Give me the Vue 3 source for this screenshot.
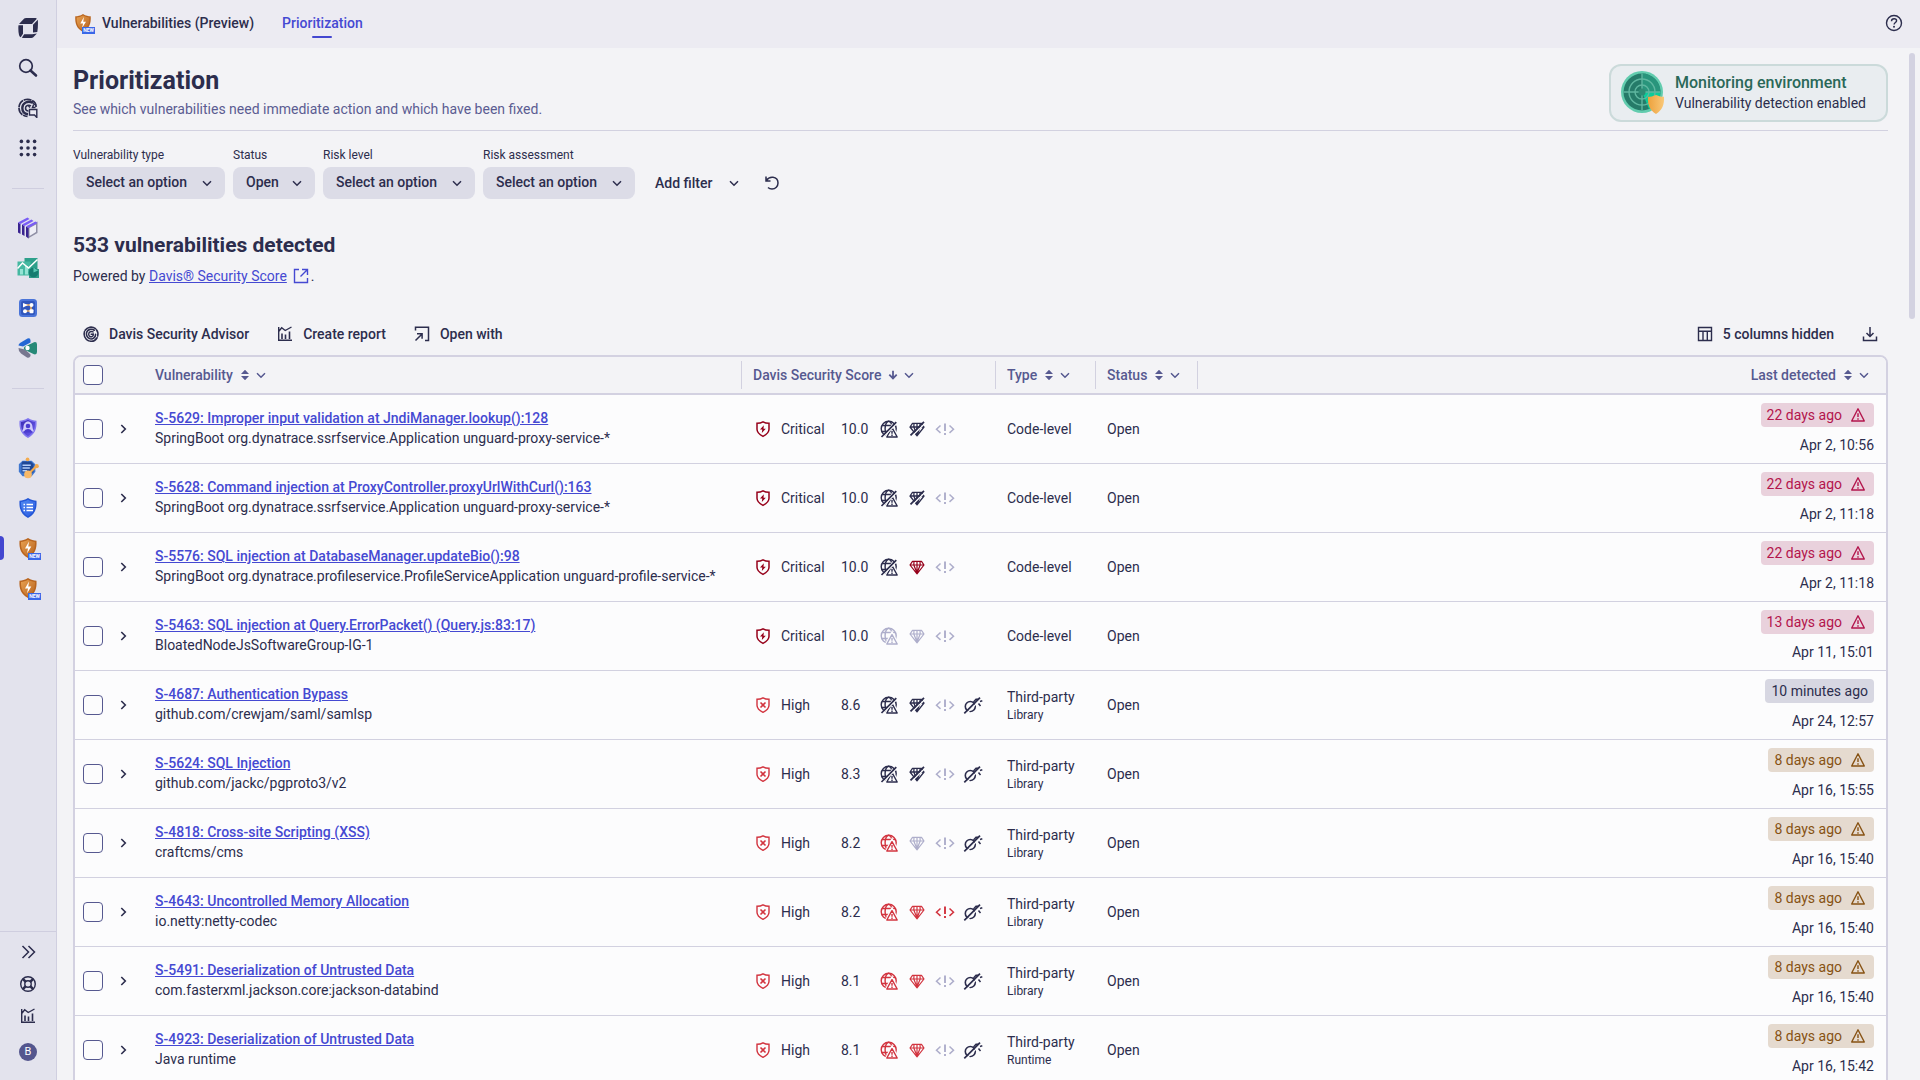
<script setup>
import { ref } from 'vue'

const railApps = [
  ['cubes', 'Kubernetes'],
  ['dashboards', 'Dashboards'],
  ['workflows', 'Workflows'],
  ['services', 'Services'],
]
const railSecurity = [
  { icon: 'attack', name: 'Attacks' },
  { icon: 'investigate', name: 'Investigations' },
  { icon: 'posture', name: 'Security posture' },
  { icon: 'shield', name: 'Vulnerabilities', active: true, fresh: true },
  { icon: 'shield', name: 'Security overview', fresh: true },
]

const filters = ref([
  { id: 'type', label: 'Vulnerability type', value: 'Select an option', wide: true },
  { id: 'status', label: 'Status', value: 'Open', wide: false },
  { id: 'risk', label: 'Risk level', value: 'Select an option', wide: true },
  { id: 'assessment', label: 'Risk assessment', value: 'Select an option', wide: true },
])

const columns = [
  { key: 'vulnerability', label: 'Vulnerability', sort: 'sort' },
  { key: 'score', label: 'Davis Security Score', sort: 'down' },
  { key: 'type', label: 'Type', sort: 'sort' },
  { key: 'status', label: 'Status', sort: 'sort' },
]

const none = { globe: 'off', gem: 'off', code: 'none' }
const rows = [
  { title: 'S-5629: Improper input validation at JndiManager.lookup():128', entity: 'SpringBoot org.dynatrace.ssrfservice.Application unguard-proxy-service-*', level: 'Critical', score: '10.0', ...none, type: 'Code-level', age: '22 days ago', tone: 'red', date: 'Apr 2, 10:56' },
  { title: 'S-5628: Command injection at ProxyController.proxyUrlWithCurl():163', entity: 'SpringBoot org.dynatrace.ssrfservice.Application unguard-proxy-service-*', level: 'Critical', score: '10.0', ...none, type: 'Code-level', age: '22 days ago', tone: 'red', date: 'Apr 2, 11:18' },
  { title: 'S-5576: SQL injection at DatabaseManager.updateBio():98', entity: 'SpringBoot org.dynatrace.profileservice.ProfileServiceApplication unguard-profile-service-*', level: 'Critical', score: '10.0', globe: 'off', gem: 'on', code: 'none', type: 'Code-level', age: '22 days ago', tone: 'red', date: 'Apr 2, 11:18' },
  { title: 'S-5463: SQL injection at Query.ErrorPacket() (Query.js:83:17)', entity: 'BloatedNodeJsSoftwareGroup-IG-1', level: 'Critical', score: '10.0', globe: 'none', gem: 'none', code: 'none', type: 'Code-level', age: '13 days ago', tone: 'red', date: 'Apr 11, 15:01' },
  { title: 'S-4687: Authentication Bypass', entity: 'github.com/crewjam/saml/samlsp', level: 'High', score: '8.6', ...none, type: 'Third-party', sub: 'Library', age: '10 minutes ago', tone: 'neutral', date: 'Apr 24, 12:57' },
  { title: 'S-5624: SQL Injection', entity: 'github.com/jackc/pgproto3/v2', level: 'High', score: '8.3', ...none, type: 'Third-party', sub: 'Library', age: '8 days ago', tone: 'amber', date: 'Apr 16, 15:55' },
  { title: 'S-4818: Cross-site Scripting (XSS)', entity: 'craftcms/cms', level: 'High', score: '8.2', globe: 'on', gem: 'none', code: 'none', type: 'Third-party', sub: 'Library', age: '8 days ago', tone: 'amber', date: 'Apr 16, 15:40' },
  { title: 'S-4643: Uncontrolled Memory Allocation', entity: 'io.netty:netty-codec', level: 'High', score: '8.2', globe: 'on', gem: 'on', code: 'on', type: 'Third-party', sub: 'Library', age: '8 days ago', tone: 'amber', date: 'Apr 16, 15:40' },
  { title: 'S-5491: Deserialization of Untrusted Data', entity: 'com.fasterxml.jackson.core:jackson-databind', level: 'High', score: '8.1', globe: 'on', gem: 'on', code: 'none', type: 'Third-party', sub: 'Library', age: '8 days ago', tone: 'amber', date: 'Apr 16, 15:40' },
  { title: 'S-4923: Deserialization of Untrusted Data', entity: 'Java runtime', level: 'High', score: '8.1', globe: 'on', gem: 'on', code: 'none', type: 'Third-party', sub: 'Runtime', age: '8 days ago', tone: 'amber', date: 'Apr 16, 15:42' },
]
</script>

<template>
  <div class="shell">
    <svg class="sprite" aria-hidden="true">
      <defs>
        <linearGradient id="g-orange" x1="0" y1="0" x2="1" y2="1"><stop offset="0" stop-color="#e8a050" /><stop offset="1" stop-color="#b86420" /></linearGradient>
        <linearGradient id="g-gold" x1="0" y1="0" x2="1" y2="0"><stop offset="0" stop-color="#eda13c" /><stop offset="1" stop-color="#f9c878" /></linearGradient>
        <linearGradient id="g-violet" x1="0" y1="0" x2="1" y2="1"><stop offset="0" stop-color="#3a2bb4" /><stop offset="1" stop-color="#6c5cf0" /></linearGradient>
        <linearGradient id="g-blue" x1="0" y1="0" x2="1" y2="1"><stop offset="0" stop-color="#5089f2" /><stop offset="1" stop-color="#2b5be0" /></linearGradient>
      </defs>
      <symbol id="i-logo" viewBox="0 0 20 20">
        <path fill="currentColor" d="M6.200.6Q7 0 8 0H17.500Q19 .1 18.600 1L14 6H1ZM.5 7.200H5v8.600L2.700 19.300Q1.500 19 1 17 0 12 .5 7.200ZM15 6.800 19.800 1.700Q20.300 8 19.300 14L15 14.600ZM3.800 19.700 6.200 16.300h8l4.700-.7-3.600 3.700q-.8.7-2 .7-5 .2-9.500-.3Z" />
      </symbol>
      <symbol id="i-search" viewBox="0 0 20 20">
        <circle cx="8" cy="8" r="6.300" fill="none" stroke="currentColor" stroke-width="1.700" /><path d="m12.500 12.500 5.500 5" stroke="currentColor" stroke-width="2.600" stroke-linecap="round" />
      </symbol>
      <symbol id="i-davis" viewBox="-2 -2 24 24">
        <g fill="none" stroke="currentColor" stroke-linecap="round">
          <path d="M15.500 3.500C11 .5 5.500 1.500 3 5.500M2.200 7C.8 11 2.500 16 7 18M8.500 18.500c3.500.8 7-1 8.800-4M18 12.500c.8-3 .2-5.500-1.500-7.500" stroke-width="1.900" />
          <path d="M14 5.500C10.500 3 6.500 4.500 5 7.500c-1.500 3.500.5 7.500 4 8.300 3.500.7 6.500-2 6.500-5.500" stroke-width="1.900" />
          <path d="M12.500 7.500C9.500 6 7.200 8 7.200 10.200c0 2.300 2.200 3.600 4 2.900 1.400-.6 1.800-1.800 1.600-3l-2.600.2" stroke-width="1.700" />
        </g>
      </symbol>
      <symbol id="i-copilot" viewBox="0 0 20 20">
        <g fill="none" stroke="currentColor">
          <path d="M18 9C18.500 3 12 .8 8 1.500 3 2.500.8 6.500 1 10.500c.3 4.500 3.500 7.500 8.500 8" stroke-width="1.700" stroke-dasharray="8 .7" />
          <path d="M14.500 4.800C10 2 4.300 5 4.300 10c0 4 2.500 6 5.700 6.300" stroke-width="2.400" /><path d="M13 8c-2.500-2-5.500 0-5.500 2s1 3 3 3" stroke-width="1.500" />
          <path d="M11.500 17v-5.500h7.300v8l-2.300-2.500h-5Z" stroke-width="1.400" fill="#e9e9f2" /><path d="m14 3 1.500 3 2.500 1M10.500 8l1.500 1.500M15.500 7l-1 2.500h3" stroke-width="1.500" />
        </g>
      </symbol>
      <symbol id="i-grid" viewBox="0 0 20 20">
        <g fill="currentColor"><circle v-for="n in 9" :key="n" :cx="3.400 + ((n - 1) % 3) * 6.600" :cy="3.400 + Math.floor((n - 1) / 3) * 6.600" r="1.800" /></g>
      </symbol>
      <symbol id="i-cubes" viewBox="0 0 22 22">
        <path d="M10 9 20.500 4.500V16L11 21.500Z" fill="#8f8fa5" /><path d="m12.500 11 6.500-3.500v7.500l-6.500 4Z" fill="#eeeef6" />
        <path d="M1 5.500 3.500 7v10L1 15.500ZM5 7.500 7.500 9v10L5 17.500ZM9 9.500l2.500 1.500v10.500L9 19.500Z" fill="#39238f" />
        <path d="m1 5.500 9.500-5L12.500 2 3.500 7ZM5 7.500l9.500-5 2 1.500L7.500 9ZM9 9.500l9.500-5 2 1.500-9 5Z" fill="#7a5df5" />
      </symbol>
      <symbol id="i-dashboards" viewBox="0 0 22 22">
        <path d="M7.500 1h13v13h-13Z" fill="#2ea08b" /><path d="M.5 4.500h13v14H.5Z" fill="#45b8a1" /><path d="M3 12h3v5.500H3zm5-3h3v8.500H8z" fill="#95e3d4" />
        <path d="M12 12h10v9H12Z" fill="#2f9a88" /><circle cx="16.500" cy="15.500" r="4.800" fill="#167c70" /><path d="M16.500 10.500v5l4.500-2" fill="#5ac8b3" /><path d="m.5 11.500 5-5.500 6 5 9-8.500" fill="none" stroke="#fff" stroke-width="1.500" />
      </symbol>
      <symbol id="i-workflows" viewBox="0 0 22 22">
        <rect x="2" y="2" width="18" height="18" rx="3.500" fill="#4a74d8" /><rect x="4" y="4" width="14" height="14" rx="2" fill="#3157bd" />
        <path d="M8 8h6v6H8" fill="none" stroke="#efb060" stroke-width="1.600" /><path d="m6 6 5 2-5 2.500Z" fill="#fff" /><circle cx="14.500" cy="8" r="2" fill="#fff" /><circle cx="8" cy="14.200" r="2" fill="#fff" /><rect x="12.500" y="12.300" width="4" height="4" rx="1" fill="#fff" />
      </symbol>
      <symbol id="i-services" viewBox="0 0 22 22">
        <path d="M1.500 8.500Q1.500 7 3 6L10.500 1.500Q13.500.5 13.500 3.500v2L6 9.500Z" fill="#2467d4" /><path d="M1.500 11 8 12.500l5.500 5V19q-1 2.500-3.500 1.500L4 16.500Q1.200 14 1.500 11Z" fill="#77778f" /><path d="M7.500 9.700 17 5.200q3-.7 3 2.300v7.500q0 3-3 2.300l-9.500-4.500q-1.500-1.500 0-3.100Z" fill="#268977" /><circle cx="10.500" cy="11" r="2.200" fill="#fff" />
      </symbol>
      <symbol id="i-attack" viewBox="0 0 22 22">
        <path d="M11 1c3 2 6 2.500 8.500 2.700.5 8-1.500 13.500-8.500 17.300C4 17.200 2 11.700 2.500 3.700 5 3.500 8 3 11 1Z" fill="#8076ef" /><path d="M11 2.800c2.500 1.400 4.800 2 7 2.200.2 6.500-1.500 11-7 14.300C5.500 16 3.800 11.500 4 5c2.200-.2 4.500-.8 7-2.200Z" fill="url(#g-violet)" /><path d="M11 4.500c2.500 0 4.500 2.500 4.500 5.500 0 1.500 1 3 1.500 4.500H5C5.500 13 6.500 11.500 6.500 10c0-3 2-5.500 4.500-5.500Z" fill="#cfcaf9" /><circle cx="11" cy="9" r="2.300" fill="#4a3bd0" /><path d="M6.500 15.500c1-2.500 2.500-3.500 4.500-3.500s3.500 1 4.500 3.500Z" fill="#4a3bd0" />
      </symbol>
      <symbol id="i-investigate" viewBox="0 0 24 24">
        <path d="M6 4h10l4 4v8l-4 5H6l-4-5V8Z" fill="#3f77cf" /><path d="M6 5h9l3 3v9H5V7Z" fill="#1f4896" /><path d="M6 9h9M6 12h8M6 15h5" stroke="#b2cdfa" stroke-width="1.400" /><path d="m12 19 9-9" stroke="#f3a94b" stroke-width="2.300" /><circle cx="12" cy="19" r="4.200" fill="#f7b968" /><circle cx="21.500" cy="10" r="2.300" fill="#f3ab50" /><circle cx="11.500" cy="2.500" r="2" fill="#f3ab50" />
      </symbol>
      <symbol id="i-posture" viewBox="0 0 22 22">
        <path d="M11 1c3 2 6 2.500 8.500 2.700.5 8-1.500 13.500-8.500 17.300C4 17.200 2 11.700 2.500 3.700 5 3.500 8 3 11 1Z" fill="#2457d6" /><path d="M11 2.800c2.500 1.400 4.800 2 7 2.200.2 6.500-1.500 11-7 14.300C5.500 16 3.800 11.500 4 5c2.200-.2 4.500-.8 7-2.200Z" fill="url(#g-blue)" /><path d="M6.500 7.500H8m1.500 0H16M6.500 10.500H8m1.500 0H16M6.500 13.500H8m1.500 0H16" stroke="#fff" stroke-width="1.300" />
      </symbol>
      <symbol id="i-shield" viewBox="0 0 22 22">
        <path d="M11 1c3 2 6 2.500 8.500 2.700.5 8-1.500 13.500-8.500 17.300C4 17.200 2 11.700 2.500 3.700 5 3.500 8 3 11 1Z" fill="#b9651f" /><path d="M11 2.800c2.500 1.400 4.800 2 7 2.200.2 6.500-1.500 11-7 14.300C5.500 16 3.800 11.500 4 5c2.200-.2 4.500-.8 7-2.200Z" fill="url(#g-orange)" /><path d="M12 4.500 8 11.500h3l-1 5 4.300-7h-3Z" fill="#fff" />
      </symbol>
      <symbol id="i-expand" viewBox="0 0 20 20"><path d="m4.500 4 6 6-6 6M10.500 4l6 6-6 6" fill="none" stroke="currentColor" stroke-width="1.500" /></symbol>
      <symbol id="i-support" viewBox="0 0 20 20">
        <g fill="none" stroke="currentColor" stroke-width="1.400"><circle cx="10" cy="10" r="7.300" /><circle cx="10" cy="10" r="3.200" /><path d="m4.800 4.800 3 3M15.200 4.800l-3 3M4.800 15.200l3-3M15.200 15.200l-3-3" stroke-width="2.600" /></g>
      </symbol>
      <symbol id="i-report" viewBox="0 0 20 20">
        <g fill="none" stroke="currentColor" stroke-width="1.400"><path d="M3.700 3v13.300H17M3.700 7.500l3-3.700 3.500 2.700L16.500 3" /><path d="M7 9.500V15M10.500 10.500V15M14.500 7.500V15" stroke-width="1.600" /></g>
      </symbol>
      <symbol id="i-open" viewBox="0 0 20 20">
        <g fill="none" stroke="currentColor" stroke-width="1.500"><path d="M3.500 6.500V3.200h13v13.300H13M3.500 16.500l6.300-6.300M5 9.700h5.100v5.100" /></g>
      </symbol>
      <symbol id="i-help" viewBox="0 0 20 20">
        <g fill="none" stroke="currentColor" stroke-width="1.400"><circle cx="10" cy="10" r="7.500" /><path d="M7.500 8.200c0-1.600 1-2.500 2.600-2.500 1.500 0 2.500.8 2.500 2.100 0 1.700-2.500 1.800-2.500 3.700" /></g><circle cx="10" cy="13.800" r="1" fill="currentColor" />
      </symbol>
      <symbol id="i-chevron" viewBox="0 0 16 16"><path d="m4 6.200 4 4 4-4" fill="none" stroke="currentColor" stroke-width="1.500" /></symbol>
      <symbol id="i-chevron-right" viewBox="0 0 16 16"><path d="m6.300 4 4 4-4 4" fill="none" stroke="currentColor" stroke-width="1.600" /></symbol>
      <symbol id="i-reset" viewBox="0 0 20 20"><path d="M4 3.500V8h4.500M4.300 7.500C6 5 8.500 4 11 4.300c3 .4 5 2.800 5 5.700 0 3.200-2.500 6-6 6-1.700 0-3-.5-4-1.500" fill="none" stroke="currentColor" stroke-width="1.500" /></symbol>
      <symbol id="i-external" viewBox="0 0 20 20"><path d="M8 3.500H3.500v13h13V12M11 3.500h5.500V9M16.500 3.500l-7 7" fill="none" stroke="currentColor" stroke-width="1.400" /></symbol>
      <symbol id="i-columns" viewBox="0 0 20 20"><path d="M3.500 3.500h13v13h-13ZM3.500 7.300h13M8 7.300v9.200M12.300 7.300v9.200" fill="none" stroke="currentColor" stroke-width="1.400" /></symbol>
      <symbol id="i-download" viewBox="0 0 20 20"><path d="M3.500 12.500v4h13v-4M10 3v9.500M6.500 9l3.500 3.500L13.500 9" fill="none" stroke="currentColor" stroke-width="1.500" /></symbol>
      <symbol id="i-sort" viewBox="0 0 12 16"><path d="M2 7h8L6 2.800ZM2 9h8l-4 4.200Z" fill="currentColor" /></symbol>
      <symbol id="i-down" viewBox="0 0 12 16"><path d="M6 3.800v7.500M2.300 7.700 6 11.400l3.700-3.700" fill="none" stroke="currentColor" stroke-width="1.800" /></symbol>
      <symbol id="i-warn" viewBox="0 0 20 20"><path d="M10 3.800 16.300 16H3.700Z" fill="none" stroke="currentColor" stroke-width="1.400" stroke-linejoin="round" /><path d="M10 8.200v3.800M10 13.200v1.500" stroke="currentColor" stroke-width="1.400" /></symbol>
      <symbol id="i-Critical" viewBox="0 0 20 20"><path d="M10 2.800c2 1.200 4 1.500 6 1.500v6c0 3-2.500 5.300-6 7-3.500-1.700-6-4-6-7v-6c2 0 4-.3 6-1.500Z" fill="none" stroke="currentColor" stroke-width="1.500" /><path d="M10.800 6.200 7 10.500h2.300L8.800 14l4-4.300h-2.300Z" fill="currentColor" /></symbol>
      <symbol id="i-High" viewBox="0 0 20 20"><path d="M10 2.800c2 1.200 4 1.500 6 1.500v6c0 3-2.500 5.300-6 7-3.500-1.700-6-4-6-7v-6c2 0 4-.3 6-1.500Z" fill="none" stroke="currentColor" stroke-width="1.400" /><path d="m7.500 7.500 5 5m0-5-5 5" stroke="currentColor" stroke-width="1.600" /></symbol>
      <symbol id="i-globe-on" viewBox="0 0 20 20">
        <g fill="none" stroke="currentColor" stroke-width="1.400"><circle cx="9.700" cy="9.700" r="7.500" /><ellipse cx="9.700" cy="9.700" rx="3.600" ry="7.500" /><path d="M3 6.500h13.500M2.500 12.500h14" /></g>
        <path d="m13 7.700 5.500 10.600h-11Z" fill="#fcfcfd" stroke="#fcfcfd" stroke-width="3.200" />
        <path d="m13 8.700 5.200 9.300H7.800Z" fill="none" stroke="currentColor" stroke-width="1.400" stroke-linejoin="round" /><path d="M13 12v2.800M13 15.600V17" stroke="currentColor" stroke-width="1.400" />
      </symbol>
      <symbol id="i-globe-off" viewBox="0 0 20 20">
        <g fill="none" stroke="currentColor" stroke-width="1.400"><circle cx="9.700" cy="9.700" r="7.500" /><ellipse cx="9.700" cy="9.700" rx="3.600" ry="7.500" /><path d="M3 6.500h13.500M2.500 12.500h14" /></g>
        <path d="m13 7.700 5.500 10.600h-11Z" fill="#fcfcfd" stroke="#fcfcfd" stroke-width="3.200" />
        <path d="m13 8.700 5.200 9.300H7.800Z" fill="none" stroke="currentColor" stroke-width="1.400" stroke-linejoin="round" /><path d="M13 12v2.800M13 15.600V17" stroke="currentColor" stroke-width="1.400" />
        <path d="M4 18.300 18 4.300" stroke="#fcfcfd" stroke-width="1.400" /><path d="M2.500 18 17.300 3.200" stroke="currentColor" stroke-width="1.700" />
      </symbol>
      <symbol id="i-gem-on" viewBox="0 0 20 20"><path d="M5.500 4.300h9L17 8l-7 8.800L3 8ZM3 8h14M7 4.500 6.800 8l3.200 8M13 4.500l.2 3.500-3.200 8M10 4v12" fill="none" stroke="currentColor" stroke-width="1.200" stroke-linejoin="round" /></symbol>
      <symbol id="i-gem-off" viewBox="0 0 20 20">
        <path d="M5.500 4.300h9L17 8l-7 8.800L3 8ZM3 8h14M7 4.500 6.800 8l3.200 8M13 4.500l.2 3.500-3.200 8M10 4v12" fill="none" stroke="currentColor" stroke-width="1.300" stroke-linejoin="round" />
        <path d="M4.800 17.300 18 4.200" stroke="#fcfcfd" stroke-width="1.400" /><path d="M3.500 16.300 17 2.800" stroke="currentColor" stroke-width="1.700" />
      </symbol>
      <symbol id="i-code" viewBox="0 0 20 20"><path d="m5.500 6.500-4 3.700 4 3.700M14.500 6.500l4 3.700-4 3.700" fill="none" stroke="currentColor" stroke-width="1.500" /><path d="M10 4.500V12M10 14v2" stroke="currentColor" stroke-width="1.900" /></symbol>
      <symbol id="i-bomb" viewBox="0 0 20 20">
        <circle cx="7.300" cy="11.500" r="5" fill="none" stroke="currentColor" stroke-width="1.600" /><path d="m10.500 7 2.500-2.800h2" fill="none" stroke="currentColor" stroke-width="1.400" />
        <path d="M3 19 17 5" stroke="#fcfcfd" stroke-width="1.300" /><path d="M1.300 18.300 17 2.600" stroke="currentColor" stroke-width="1.700" />
        <path d="m17 6.500 2.300-.7M15.500 8.500l2 2.500" stroke="currentColor" stroke-width="1.500" />
      </symbol>
      <symbol id="i-radar" viewBox="0 0 44 44">
        <circle cx="21" cy="21" r="21" fill="#62ccae" /><circle cx="21" cy="21" r="18.500" fill="#257b69" />
        <path d="M21 21V2.500A18.500 18.500 0 0 1 39.500 21Z" fill="#29957c" /><path d="M21 21h18.500A18.500 18.500 0 0 1 28 38Z" fill="#0ccc99" />
        <g fill="none" stroke="#5fb7a0" stroke-width="1.400"><circle cx="21" cy="21" r="13" /><circle cx="21" cy="21" r="7" /><path d="M21 2.500v37M2.500 21h37" /></g><circle cx="21" cy="21" r="3.500" fill="#2f8a74" />
        <path d="M35 24c3 1.300 5.500 1.800 8 1.800.5 8-1.800 13.500-8 17.200-6.200-3.700-8.500-9.200-8-17.200 2.500 0 5-.5 8-1.800Z" fill="url(#g-gold)" />
      </symbol>
    </svg>

    <nav class="rail" aria-label="Main">
      <a href="#" class="rail-item" aria-label="Home"><svg class="ic20"><use href="#i-logo" /></svg></a>
      <button class="rail-item" aria-label="Search"><svg class="ic20"><use href="#i-search" /></svg></button>
      <button class="rail-item" aria-label="Davis CoPilot"><svg class="ic20"><use href="#i-copilot" /></svg></button>
      <button class="rail-item" aria-label="Apps"><svg class="ic20"><use href="#i-grid" /></svg></button>
      <hr />
      <a v-for="[icon, name] in railApps" :key="name" href="#" class="rail-item" :aria-label="name"><svg class="ic22"><use :href="'#i-' + icon" /></svg></a>
      <hr />
      <a v-for="item in railSecurity" :key="item.name" href="#" class="rail-item" :class="{ active: item.active }" :aria-label="item.name">
        <span class="badged"><svg class="ic22"><use :href="'#i-' + item.icon" /></svg><span v-if="item.fresh" class="new">NEW</span></span>
      </a>
      <div class="rail-foot">
        <button aria-label="Expand"><svg class="ic20"><use href="#i-expand" /></svg></button>
        <button aria-label="Support"><svg class="ic20"><use href="#i-support" /></svg></button>
        <button aria-label="Usage"><svg class="ic20"><use href="#i-report" /></svg></button>
        <button class="user"><span class="avatar">B</span></button>
      </div>
    </nav>

    <div class="app">
      <header class="topbar">
        <a href="#" class="app-name"><span class="badged"><svg class="ic20"><use href="#i-shield" /></svg><span class="new">NEW</span></span>Vulnerabilities (Preview)</a>
        <a href="#" class="tab">Prioritization</a>
        <button class="icon-btn help" aria-label="Help"><svg class="ic20"><use href="#i-help" /></svg></button>
      </header>

      <main class="page">
        <div class="page-head">
          <div>
            <h1>Prioritization</h1>
            <p class="lead">See which vulnerabilities need immediate action and which have been fixed.</p>
          </div>
          <div class="monitor">
            <svg class="ic44"><use href="#i-radar" /></svg>
            <div><strong>Monitoring environment</strong><span>Vulnerability detection enabled</span></div>
          </div>
        </div>

        <div class="filters">
          <div v-for="f in filters" :key="f.id" class="filter">
            <label :for="f.id">{{ f.label }}</label>
            <div class="select" :class="{ wide: f.wide }">
              <select :id="f.id" v-model="f.value"><option>{{ f.value }}</option></select>
              <svg class="ic16"><use href="#i-chevron" /></svg>
            </div>
          </div>
          <button class="btn add">Add filter<svg class="ic16"><use href="#i-chevron" /></svg></button>
          <button class="icon-btn" aria-label="Reset filters"><svg class="ic20"><use href="#i-reset" /></svg></button>
        </div>

        <h2>533 vulnerabilities detected</h2>
        <p class="powered">Powered by <a href="#">Davis® Security Score</a><svg class="ic20"><use href="#i-external" /></svg>.</p>

        <div class="toolbar">
          <button class="btn"><svg class="ic20"><use href="#i-davis" /></svg>Davis Security Advisor</button>
          <button class="btn"><svg class="ic20"><use href="#i-report" /></svg>Create report</button>
          <button class="btn"><svg class="ic20"><use href="#i-open" /></svg>Open with</button>
          <button class="btn hidden-cols"><svg class="ic20"><use href="#i-columns" /></svg>5 columns hidden</button>
          <button class="icon-btn" aria-label="Download"><svg class="ic20"><use href="#i-download" /></svg></button>
        </div>

        <div class="table-box">
          <table>
            <colgroup>
              <col class="c-check" /><col class="c-toggle" /><col class="c-vulnerability" /><col class="c-score" /><col class="c-type" /><col class="c-status" /><col /><col class="c-date" />
            </colgroup>
            <thead>
              <tr>
                <th><input type="checkbox" aria-label="Select all" /></th>
                <th></th>
                <th v-for="c in columns" :key="c.key" class="ruled">
                  <span class="head">{{ c.label }}<svg class="ic-sort"><use :href="'#i-' + c.sort" /></svg><svg class="ic16"><use href="#i-chevron" /></svg></span>
                </th>
                <th></th>
                <th class="h-date"><span class="head">Last detected<svg class="ic-sort"><use href="#i-sort" /></svg><svg class="ic16"><use href="#i-chevron" /></svg></span></th>
              </tr>
            </thead>
            <tbody>
              <tr v-for="r in rows" :key="r.title">
                <td><input type="checkbox" :aria-label="'Select ' + r.title" /></td>
                <td class="toggle"><button aria-label="Expand row"><svg class="ic16"><use href="#i-chevron-right" /></svg></button></td>
                <td class="vuln"><a href="#">{{ r.title }}</a><span>{{ r.entity }}</span></td>
                <td>
                  <div class="score" :class="r.level.toLowerCase()">
                    <svg class="ic20 on"><use :href="'#i-' + r.level" /></svg>
                    <span>{{ r.level }}</span><span>{{ r.score }}</span>
                    <svg class="ic20" :class="r.globe"><use :href="r.globe === 'off' ? '#i-globe-off' : '#i-globe-on'" /></svg>
                    <svg class="ic20" :class="r.gem"><use :href="r.gem === 'off' ? '#i-gem-off' : '#i-gem-on'" /></svg>
                    <svg class="ic20" :class="r.code"><use href="#i-code" /></svg>
                    <svg v-if="r.sub" class="ic20"><use href="#i-bomb" /></svg>
                  </div>
                </td>
                <td class="kind">{{ r.type }}<small v-if="r.sub">{{ r.sub }}</small></td>
                <td>Open</td>
                <td></td>
                <td class="date">
                  <span class="badge" :class="r.tone">{{ r.age }}<svg v-if="r.tone !== 'neutral'" class="ic20"><use href="#i-warn" /></svg></span>
                  <time>{{ r.date }}</time>
                </td>
              </tr>
            </tbody>
          </table>
        </div>
      </main>
      <div class="thumb"></div>
    </div>
  </div>
</template>

<style>
body { margin: 0; }
</style>

<style scoped>
* { box-sizing: border-box; }
.shell {
  display: flex;
  height: 100vh;
  overflow: hidden;
  background: #f3f3f6;
  color: #2c2d4d;
  font: 14px/20px Roboto, "Liberation Sans", sans-serif;
}
h1, h2, p { margin: 0; }
a { color: inherit; text-decoration: none; }
button, select { font: inherit; color: inherit; border: 0; padding: 0; background: none; }
svg { display: block; flex: none; }
.sprite { position: absolute; width: 0; height: 0; }
.ic16 { width: 16px; height: 16px; }
.ic20 { width: 20px; height: 20px; }
.ic22 { width: 22px; height: 22px; }
.ic44 { width: 44px; height: 44px; }
.ic-sort { width: 12px; height: 16px; }

.rail { flex: none; width: 57px; display: flex; flex-direction: column; align-items: center; padding-top: 8px; background: #e3e3ed; border-right: 1px solid #d0cfe0; }
.rail-item { position: relative; width: 100%; height: 40px; flex: none; display: flex; align-items: center; justify-content: center; }
.rail hr { width: 32px; height: 1px; margin: 20px 0 19px; border: 0; background: #cfcedf; }
.active::before { content: ""; position: absolute; left: 0; top: 8px; width: 4px; height: 24px; border-radius: 0 4px 4px 0; background: #4347d0; }
.badged { position: relative; }
.new { position: absolute; right: -2px; bottom: -1px; padding: 0 1px; background: #3a68e8; color: #fff; font-size: 5px; line-height: 7px; font-weight: 700; }
.rail-foot { margin-top: auto; width: 100%; padding: 4px 0 8px; border-top: 1px solid #cfcedf; display: flex; flex-direction: column; align-items: center; }
.rail-foot button { height: 32px; display: flex; align-items: center; }
.rail-foot .user { height: 40px; }
.avatar { width: 18px; height: 18px; border-radius: 50%; background: #54568e; color: #fff; font-size: 11px; line-height: 18px; text-align: center; }

.app { position: relative; flex: 1; min-width: 0; display: flex; flex-direction: column; }
.topbar { flex: none; height: 48px; display: flex; align-items: center; padding: 0 16px 2px; background: #ecebf2; font-weight: 500; }
.app-name { display: flex; align-items: center; gap: 9px; }
.tab { position: relative; margin-left: 28px; color: #4549d2; }
.tab::after { content: ""; position: absolute; left: 50%; bottom: -5px; width: 20px; height: 2px; margin-left: -10px; background: #4347d0; border-radius: 1px; }
.help { margin-left: auto; }
.icon-btn { display: flex; align-items: center; }
.page { flex: 1; min-height: 0; overflow-y: auto; scrollbar-width: none; padding: 0 32px 32px 16px; }
.thumb { position: absolute; right: 5px; top: 53px; width: 6px; height: 266px; border-radius: 3px; background: #d3d2e1; }

.page-head { display: flex; justify-content: space-between; align-items: center; padding: 16px 0 8px; border-bottom: 1px solid #d2d1e0; }
h1 { font-size: 25px; line-height: 28px; font-weight: 700; }
.lead { margin-top: 4px; color: #5b5c92; }
.monitor { display: flex; align-items: center; gap: 10px; height: 58px; padding: 0 20px 0 10px; border: 2px solid #cbdada; border-radius: 12px; background: #e9edf0; }
.monitor strong, .monitor span { display: block; }
.monitor strong { font-size: 16px; font-weight: 500; color: #2a6858; }

.filters { display: flex; align-items: flex-end; gap: 8px; margin-top: 16px; }
.filter label { display: block; margin-bottom: 4px; font-size: 12px; line-height: 16px; }
.select { position: relative; width: 82px; }
.select.wide { width: 152px; }
.select select { width: 100%; height: 32px; padding: 0 13px 2px; border-radius: 8px; background: #dcdce7; font-weight: 500; appearance: none; }
.select svg { position: absolute; right: 10px; top: 8px; pointer-events: none; }
.btn { display: flex; align-items: center; gap: 8px; height: 32px; font-weight: 500; }
.add { padding: 0 12px; gap: 14px; }
.filters .icon-btn { height: 32px; }

h2 { margin-top: 32px; font-size: 21px; line-height: 28px; font-weight: 700; }
.powered { margin-top: 7px; display: flex; align-items: center; white-space: pre; }
.powered a { margin-right: 4px; text-decoration: underline; }
.powered a, .powered svg { color: #4549d2; }

.toolbar { display: flex; align-items: center; gap: 26px; margin-top: 32px; padding: 0 8px; }
.hidden-cols { margin-left: auto; }

.table-box { margin-top: 5px; border: 2px solid #d3d1e1; border-radius: 8px 8px 0 0; overflow: hidden; background: #fcfcfd; }
table { width: 100%; table-layout: fixed; border-spacing: 0; }
.c-check { width: 36px; }
.c-toggle { width: 33px; }
.c-vulnerability { width: 598px; }
.c-score { width: 254px; }
.c-type { width: 100px; }
.c-status { width: 102px; }
.c-date { width: 160px; }
th, td { padding: 0 11px; text-align: left; white-space: nowrap; }
th { position: relative; height: 38px; border-bottom: 2px solid #d3d1e1; background: #f3f3f6; color: #565990; font-weight: 500; }
td { height: 69px; border-bottom: 1px solid #d2d1e0; }
th:first-child, td:first-child { padding: 0 8px; }
.toggle { padding: 0 4px; }
.toggle button { display: flex; }
.ruled::after { content: ""; position: absolute; right: 0; top: 4px; width: 1px; height: 28px; background: #d2d1e0; }
.ruled:nth-child(3)::after { right: 0; }
.head { display: flex; align-items: center; }
.head .ic-sort { margin: 0 2px 0 6px; }
.h-date { padding-right: 14px; }
.h-date .head { justify-content: flex-end; }
input[type="checkbox"] { display: block; appearance: none; width: 20px; height: 20px; margin: 0; border: 1px solid #565990; border-radius: 4px; background: #fcfcfd; }
.vuln { padding-bottom: 2px; }
.vuln a { color: #4549d2; font-weight: 500; text-decoration: underline; }
.vuln a, .vuln span { display: block; width: fit-content; }
.score { display: grid; grid-template-columns: 28px 60px 38px 28px 28px 28px 20px; align-items: center; }
.critical .on { color: #96001a; }
.high .on { color: #d2343f; }
.score .none { color: #aeaecb; }
.kind small { display: block; font-size: 12px; line-height: 16px; }
.date { text-align: right; padding-right: 12px; }
.badge { display: flex; align-items: center; gap: 6px; width: fit-content; height: 24px; margin: 0 0 8px auto; padding: 0 6px; border-radius: 4px; }
.date time { display: block; }
.red { background: #e9d1dc; color: #b3154c; }
.amber { background: #e5dacf; color: #875213; }
.neutral { background: #d7d7e2; }
</style>
